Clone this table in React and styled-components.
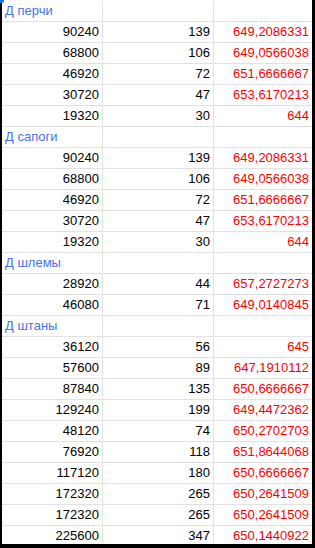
import React from "react";
import styled, { createGlobalStyle } from "styled-components";

const GlobalStyle = createGlobalStyle`
  html, body {
    margin: 0;
    padding: 0;
    background: #fff;
  }
  body {
    font-family: "Liberation Sans", Arial, sans-serif;
    font-size: 13px;
    overflow: hidden;
  }
`;

const Frame = styled.div`
  position: relative;
  box-sizing: border-box;
  width: 315px;
  height: 548px;
  border-left: 2px solid #000;
  border-right: 3px solid #000;
  border-bottom: 4px solid #000;
  background: #fff;
`;

const Sheet = styled.div`
  height: 100%;
  padding-top: 1px;
  box-sizing: border-box;
  overflow: hidden;
`;

const Handle = styled.div`
  position: absolute;
  top: 0;
  left: -2px;
  width: 4px;
  height: 3px;
  border-radius: 0 0 2px 0;
  background: #1a73e8;
`;

const Row = styled.div`
  display: grid;
  grid-template-columns: 101px 111px 98px;
  height: 21px;
`;

const Cell = styled.div`
  box-sizing: border-box;
  height: 21px;
  line-height: 20px;
  padding: 0 3px 0 3px;
  border-bottom: 1px solid #e2e2e2;
  border-right: ${(p) => (p.$last ? "none" : "1px solid #e2e2e2")};
  text-align: ${(p) => (p.$left ? "left" : "right")};
  color: ${(p) => p.$color || "#000"};
  white-space: nowrap;
`;

const groups = [
  {
    title: "Д перчи",
    rows: [
      ["90240", "139", "649,2086331"],
      ["68800", "106", "649,0566038"],
      ["46920", "72", "651,6666667"],
      ["30720", "47", "653,6170213"],
      ["19320", "30", "644"],
    ],
  },
  {
    title: "Д сапоги",
    rows: [
      ["90240", "139", "649,2086331"],
      ["68800", "106", "649,0566038"],
      ["46920", "72", "651,6666667"],
      ["30720", "47", "653,6170213"],
      ["19320", "30", "644"],
    ],
  },
  {
    title: "Д шлемы",
    rows: [
      ["28920", "44", "657,2727273"],
      ["46080", "71", "649,0140845"],
    ],
  },
  {
    title: "Д штаны",
    rows: [
      ["36120", "56", "645"],
      ["57600", "89", "647,1910112"],
      ["87840", "135", "650,6666667"],
      ["129240", "199", "649,4472362"],
      ["48120", "74", "650,2702703"],
      ["76920", "118", "651,8644068"],
      ["117120", "180", "650,6666667"],
      ["172320", "265", "650,2641509"],
      ["172320", "265", "650,2641509"],
      ["225600", "347", "650,1440922"],
    ],
  },
];

const App = () => {
  return (
    <>
      <GlobalStyle />
      <Frame>
        <Sheet>
          {groups.map((g) => (
            <React.Fragment key={g.title}>
              <Row>
                <Cell $left $color="#4a72ee">
                  {g.title}
                </Cell>
                <Cell />
                <Cell $last />
              </Row>
              {g.rows.map((r, i) => (
                <Row key={i}>
                  <Cell>{r[0]}</Cell>
                  <Cell>{r[1]}</Cell>
                  <Cell $last $color="#ff0000">
                    {r[2]}
                  </Cell>
                </Row>
              ))}
            </React.Fragment>
          ))}
        </Sheet>
        <Handle />
      </Frame>
    </>
  );
};

export default App;
